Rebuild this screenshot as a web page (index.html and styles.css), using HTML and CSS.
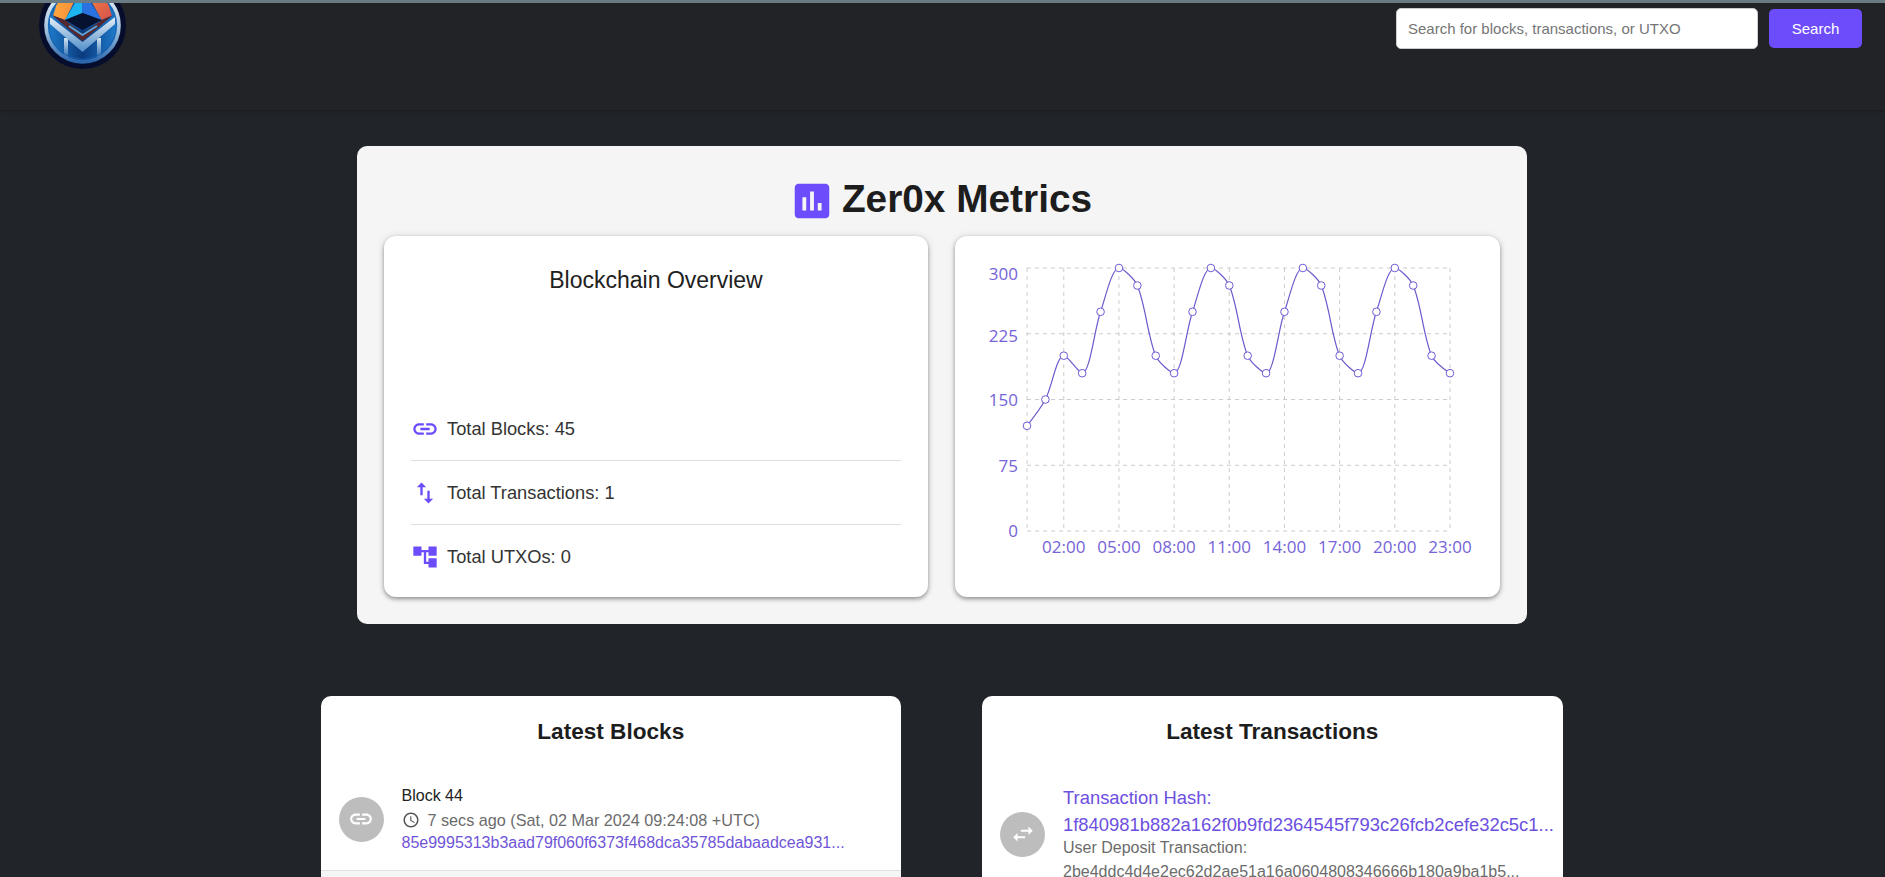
FILE: index.html
```html
<!DOCTYPE html>
<html lang="en">
<head>
<meta charset="utf-8">
<title>Zer0x Explorer</title>
<link rel="stylesheet" href="styles.css">
</head>
<body>
<header class="topbar">
  <div class="brand">
    <svg class="logo" viewBox="0 0 87 87" width="87" height="87" aria-label="Zer0x logo">
      <defs>
        <linearGradient id="ring" x1="0" y1="0" x2="0" y2="1">
          <stop offset="0" stop-color="#eef4f8"/><stop offset=".55" stop-color="#a4c4e0"/><stop offset="1" stop-color="#2a66ad"/>
        </linearGradient>
        <linearGradient id="chev" x1="0" y1="0" x2="0" y2="1">
          <stop offset="0" stop-color="#e6eff6"/><stop offset="1" stop-color="#4d8cc8"/>
        </linearGradient>
        <linearGradient id="bar" x1="0" y1="0" x2="0" y2="1">
          <stop offset="0" stop-color="#d4e4f1"/><stop offset="1" stop-color="#2f70b4"/>
        </linearGradient>
        <linearGradient id="blue" x1="0" y1="0" x2="1" y2="0">
          <stop offset="0" stop-color="#1f7fd0"/><stop offset=".5" stop-color="#0b3a7e"/><stop offset="1" stop-color="#1f7fd0"/>
        </linearGradient>
        <linearGradient id="orange" x1="0" y1="0" x2="1" y2="0">
          <stop offset="0" stop-color="#ffa63d"/><stop offset="1" stop-color="#f58a3a"/>
        </linearGradient>
        <linearGradient id="coral" x1="0" y1="0" x2="1" y2="1">
          <stop offset="0" stop-color="#f9883a"/><stop offset="1" stop-color="#d4504f"/>
        </linearGradient>
      </defs>
      <circle cx="43.5" cy="43.5" r="43.5" fill="#060c2c"/>
      <circle cx="43.5" cy="43.5" r="36" fill="url(#blue)"/>
      <path d="M14 34 L22 8 L41 8 L26 38Z" fill="url(#orange)"/>
      <path d="M73 34 L65 8 L46 8 L62.7 38Z" fill="url(#coral)"/>
      <path d="M13 33 L26 38 L43.5 52 L62.7 38 L74 33 L43.5 59Z" fill="#55282f"/>
      <path d="M43.5 8 L26 38 L43.5 31Z" fill="#1eb4f2"/>
      <path d="M43.5 8 L62.7 38 L43.5 31Z" fill="#2a72e2"/>
      <path d="M43.5 31 L62.7 38 L43.5 48 L26 38Z" fill="#071230"/>
      <path d="M30 44 L43.5 53 L58 44" fill="none" stroke="#5aa9e0" stroke-width="1.6"/>
      <path d="M25 56H29V75H25ZM58 56H62V75H58Z" fill="url(#bar)"/>
      <path d="M11 35 L43.5 60 L76 35 L76 42 L43.5 70 L11 42Z" fill="url(#chev)"/>
      <circle cx="43.5" cy="43.5" r="33.8" fill="none" stroke="#1a5fae" stroke-width="1"/>
      <circle cx="43.5" cy="43.5" r="36.5" fill="none" stroke="url(#ring)" stroke-width="3.6"/>
    </svg>
  </div>
  <form class="search">
    <input class="search-input" type="text" placeholder="Search for blocks, transactions, or UTXO">
    <button class="search-btn" type="button">Search</button>
  </form>
</header>

<main class="page">
  <section class="metrics">
    <h1 class="metrics-title">
      <svg class="metrics-icon" viewBox="0 0 24 24"><path d="M19 3H5c-1.1 0-2 .9-2 2v14c0 1.1.9 2 2 2h14c1.1 0 2-.9 2-2V5c0-1.1-.9-2-2-2zM9 17H7v-7h2v7zm4 0h-2V7h2v10zm4 0h-2v-4h2v4z"/></svg>
      <span>Zer0x Metrics</span>
    </h1>
    <div class="metrics-grid">
      <article class="card overview">
        <h2 class="overview-title">Blockchain Overview</h2>
        <ul class="stats">
          <li class="stat">
            <svg class="stat-icon" viewBox="0 0 24 24"><path d="M3.9 12c0-1.71 1.39-3.1 3.1-3.1h4V7H7c-2.76 0-5 2.24-5 5s2.24 5 5 5h4v-1.9H7c-1.71 0-3.1-1.39-3.1-3.1zM8 13h8v-2H8v2zm9-6h-4v1.9h4c1.71 0 3.1 1.39 3.1 3.1s-1.39 3.1-3.1 3.1h-4V17h4c2.76 0 5-2.24 5-5s-2.24-5-5-5z"/></svg>
            <span>Total Blocks: 45</span>
          </li>
          <li class="stat">
            <svg class="stat-icon" viewBox="0 0 24 24"><path d="M16 17.01V10h-2v7.01h-3L15 21l4-3.99h-3zM9 3 5 6.99h3V14h2V6.99h3L9 3z"/></svg>
            <span>Total Transactions: 1</span>
          </li>
          <li class="stat">
            <svg class="stat-icon" viewBox="0 0 24 24"><path d="M22 11V3h-7v3H9V3H2v8h7V8h2v10h4v3h7v-8h-7v3h-2V8h2v3z"/></svg>
            <span>Total UTXOs: 0</span>
          </li>
        </ul>
      </article>
      <article class="card chart-card">
        <svg class="chart" viewBox="0 0 545 361" width="545" height="361">
          <g class="grid">
            <path d="M72 32H495M72 97.75H495M72 163.5H495M72 229.25H495M72 295H495"/>
            <path d="M72 32V295M108.78 32V295M163.95 32V295M219.12 32V295M274.29 32V295M329.46 32V295M384.63 32V295M439.8 32V295M495 32V295"/>
          </g>
          <g class="axis axis-y">
            <text x="63" y="39.5">300</text>
            <text x="63" y="101.5">225</text>
            <text x="63" y="165.5">150</text>
            <text x="63" y="231.5">75</text>
            <text x="63" y="296.5">0</text>
          </g>
          <g class="axis axis-x">
            <text x="108.78" y="312.5">02:00</text>
            <text x="163.95" y="312.5">05:00</text>
            <text x="219.12" y="312.5">08:00</text>
            <text x="274.29" y="312.5">11:00</text>
            <text x="329.46" y="312.5">14:00</text>
            <text x="384.63" y="312.5">17:00</text>
            <text x="439.8" y="312.5">20:00</text>
            <text x="495" y="312.5">23:00</text>
          </g>
          <path class="line" d="M72 189.8c0 0 13.94 -17.82 18.39 -26.3c6.59 -12.55 11.2 -43.8 18.39 -43.8c3.85 0 15.26 17.5 18.39 17.5
            c7.9 0 12.05 -43.27 18.39 -61.4c4.7 -13.43 11.2 -43.8 18.39 -43.8c3.85 0 15.53 10.68 18.39 17.5c8.17 19.49 10.22 50.71 18.39 70.2c2.86 6.82 15.26 17.5 18.39 17.5
            c7.9 0 12.05 -43.27 18.39 -61.4c4.7 -13.43 11.2 -43.8 18.39 -43.8c3.85 0 15.53 10.68 18.39 17.5c8.17 19.49 10.22 50.71 18.39 70.2c2.86 6.82 15.26 17.5 18.39 17.5
            c7.9 0 12.05 -43.27 18.39 -61.4c4.7 -13.43 11.2 -43.8 18.39 -43.8c3.85 0 15.53 10.68 18.39 17.5c8.17 19.49 10.22 50.71 18.39 70.2c2.86 6.82 15.26 17.5 18.39 17.5
            c7.9 0 12.05 -43.27 18.39 -61.4c4.7 -13.43 11.2 -43.8 18.39 -43.8c3.85 0 15.53 10.68 18.39 17.5c8.17 19.49 10.22 50.71 18.39 70.2c2.86 6.82 18.39 17.5 18.39 17.5"/>
          <g class="dots">
            <circle cx="72" cy="189.8" r="3.8"/><circle cx="90.39" cy="163.5" r="3.8"/><circle cx="108.78" cy="119.7" r="3.8"/><circle cx="127.17" cy="137.2" r="3.8"/>
            <circle cx="145.56" cy="75.8" r="3.8"/><circle cx="163.95" cy="32" r="3.8"/><circle cx="182.34" cy="49.5" r="3.8"/><circle cx="200.73" cy="119.7" r="3.8"/><circle cx="219.12" cy="137.2" r="3.8"/>
            <circle cx="237.51" cy="75.8" r="3.8"/><circle cx="255.9" cy="32" r="3.8"/><circle cx="274.29" cy="49.5" r="3.8"/><circle cx="292.68" cy="119.7" r="3.8"/><circle cx="311.07" cy="137.2" r="3.8"/>
            <circle cx="329.46" cy="75.8" r="3.8"/><circle cx="347.85" cy="32" r="3.8"/><circle cx="366.24" cy="49.5" r="3.8"/><circle cx="384.63" cy="119.7" r="3.8"/><circle cx="403.02" cy="137.2" r="3.8"/>
            <circle cx="421.41" cy="75.8" r="3.8"/><circle cx="439.8" cy="32" r="3.8"/><circle cx="458.19" cy="49.5" r="3.8"/><circle cx="476.58" cy="119.7" r="3.8"/><circle cx="494.97" cy="137.2" r="3.8"/>
          </g>
        </svg>
      </article>
    </div>
  </section>

  <section class="lists">
    <article class="list-card">
      <h2 class="list-title">Latest Blocks</h2>
      <ul class="list">
        <li class="item item-first">
          <span class="avatar"><svg viewBox="0 0 24 24"><path d="M3.9 12c0-1.71 1.39-3.1 3.1-3.1h4V7H7c-2.76 0-5 2.24-5 5s2.24 5 5 5h4v-1.9H7c-1.71 0-3.1-1.39-3.1-3.1zM8 13h8v-2H8v2zm9-6h-4v1.9h4c1.71 0 3.1 1.39 3.1 3.1s-1.39 3.1-3.1 3.1h-4V17h4c2.76 0 5-2.24 5-5s-2.24-5-5-5z"/></svg></span>
          <div class="item-body">
            <div class="block-name">Block 44</div>
            <div class="block-time">
              <svg class="clock" viewBox="0 0 24 24"><path d="M11.99 2C6.47 2 2 6.48 2 12s4.47 10 9.99 10C17.52 22 22 17.52 22 12S17.52 2 11.99 2zM12 20c-4.42 0-8-3.58-8-8s3.58-8 8-8 8 3.58 8 8-3.58 8-8 8zm.5-13H11v6l5.25 3.15.75-1.23-4.5-2.67z"/></svg>
              <span>7 secs ago (Sat, 02 Mar 2024 09:24:08 +UTC)</span>
            </div>
            <a class="block-hash" href="#">85e9995313b3aad79f060f6373f468dca35785dabaadcea931...</a>
          </div>
        </li>
        <li class="item item-alt"></li>
      </ul>
    </article>
    <article class="list-card">
      <h2 class="list-title">Latest Transactions</h2>
      <ul class="list">
        <li class="item">
          <span class="avatar"><svg viewBox="0 0 24 24"><path d="M6.99 11 3 15l3.99 4v-3H14v-2H6.99v-3zM21 9l-3.99-4v3H10v2h7.01v3L21 9z"/></svg></span>
          <div class="item-body">
            <a class="tx-hash" href="#">Transaction Hash:<br>1f840981b882a162f0b9fd2364545f793c26fcb2cefe32c5c1...</a>
            <div class="tx-desc">User Deposit Transaction:<br>2be4ddc4d4e2ec62d2ae51a16a0604808346666b180a9ba1b5...</div>
          </div>
        </li>
      </ul>
    </article>
  </section>
</main>
</body>
</html>
```
FILE: styles.css
```css
* { box-sizing: border-box; }
html, body { height: 100%; }
body {
  margin: 0;
  background: #212529;
  font-family: "Liberation Sans", Arial, sans-serif;
  color: #212121;
  overflow: hidden;
}
ul { list-style: none; margin: 0; padding: 0; }
a { text-decoration: none; }
h1, h2 { margin: 0; }

.topbar {
  height: 110px;
  display: flex;
  justify-content: space-between;
  align-items: flex-start;
  background: #212326;
  border-top: 3px solid #6b7b83;
  box-shadow: 0 1px 3px rgba(0, 0, 0, .35);
  padding: 5px 23px 0 39px;
}
.brand {
  height: 66px;
  margin-top: -5px;
  overflow: hidden;
}
.logo { display: block; margin-top: -21px; }
.search { display: flex; align-items: center; gap: 11px; }
.search-input {
  width: 362px;
  height: 41px;
  border: 1px solid #ccc;
  border-radius: 5px;
  background: #fff;
  padding: 0 11px;
  font: 15px "Liberation Sans", Arial, sans-serif;
}
.search-input::placeholder { color: #757575; opacity: 1; }
.search-btn {
  width: 93px;
  height: 39px;
  border: 0;
  border-radius: 5px;
  background: #6c4cfb;
  color: #fff;
  font: 15px "Liberation Sans", Arial, sans-serif;
}

.page { padding: 36px 1px 0 0; }
.metrics {
  width: 1170px;
  margin: 0 auto;
  height: 478px;
  padding: 0 27px;
  background: #f5f5f5;
  border-radius: 10px;
}
.metrics-title {
  height: 90px;
  display: flex;
  justify-content: center;
  align-items: center;
  gap: 7px;
  padding: 15px 3px 0 0;
  font-size: 38.8px;
  font-weight: 700;
  color: #1d1d1d;
}
.metrics-icon { width: 46px; height: 46px; fill: #6c4cfb; margin-top: 5px; }
.metrics-grid {
  display: grid;
  grid-template-columns: 1fr 1fr;
  gap: 27px;
}
.card {
  height: 361px;
  background: #fff;
  border-radius: 12px;
  box-shadow: 0 2px 4px rgba(0, 0, 0, .38), 0 0 8px rgba(0, 0, 0, .09);
}
.overview {
  display: flex;
  flex-direction: column;
  justify-content: space-between;
  padding: 30px 27px 8px;
}
.overview-title {
  font-size: 23px;
  font-weight: 400;
  line-height: 28px;
  text-align: center;
}
.stat {
  height: 64px;
  display: flex;
  align-items: center;
  gap: 8px;
  font-size: 18.3px;
  color: #333;
  border-bottom: 1px solid #dedede;
}
.stat:last-child { border-bottom: 0; }
.stat-icon { width: 28px; height: 28px; fill: #6c4cfb; flex: none; }
.chart { display: block; }
.grid path { fill: none; stroke: #ccc; stroke-width: 1; stroke-dasharray: 4 4; }
.axis text {
  font-family: "Open Sans", sans-serif;
  font-size: 17px;
  font-weight: 400;
  fill: #7563d8;
  dominant-baseline: middle;
}
.axis-y text { text-anchor: end; }
.axis-x text { text-anchor: middle; }
.line { fill: none; stroke: #6a5acd; stroke-width: 1.2; }
.dots circle { fill: #fff; stroke: #6f5cd6; stroke-width: 1; }

.lists {
  display: flex;
  justify-content: center;
  gap: 81px;
  margin-top: 72px;
  padding-right: 1px;
}
.list-card {
  width: 580.5px;
  background: #fff;
  border-radius: 10px 10px 0 0;
  overflow: hidden;
}
.list-title {
  height: 72px;
  display: flex;
  align-items: center;
  justify-content: center;
  padding-bottom: 1px;
  font-size: 22.6px;
  font-weight: 700;
  color: #1d1d1d;
}
.item {
  display: flex;
  align-items: center;
  gap: 18px;
  padding: 16px 18px;
}
.item-first { border-bottom: 1px solid #e0e0e0; }
.item-alt { background: #f5f5f5; height: 90px; }
.avatar {
  width: 45px;
  height: 45px;
  flex: none;
  border-radius: 50%;
  background: #bdbdbd;
  display: flex;
  align-items: center;
  justify-content: center;
}
.avatar svg { width: 26px; height: 26px; fill: #fff; }
.item-body { min-width: 0; }
.block-name { font-size: 16px; line-height: 24px; color: #222; }
.block-time {
  display: flex;
  align-items: center;
  gap: 8px;
  font-size: 16.2px;
  line-height: 24px;
  color: #6b6b6b;
}
.clock { width: 18px; height: 18px; fill: #555; flex: none; }
.block-hash { display: block; font-size: 16px; line-height: 22px; color: #6f55d8; }
.tx-hash { display: block; font-size: 18.4px; line-height: 27px; color: #6c4fe0; white-space: nowrap; }
.tx-desc { margin-top: -2px; font-size: 16px; line-height: 24px; color: #6b6b6b; white-space: nowrap; }
```
